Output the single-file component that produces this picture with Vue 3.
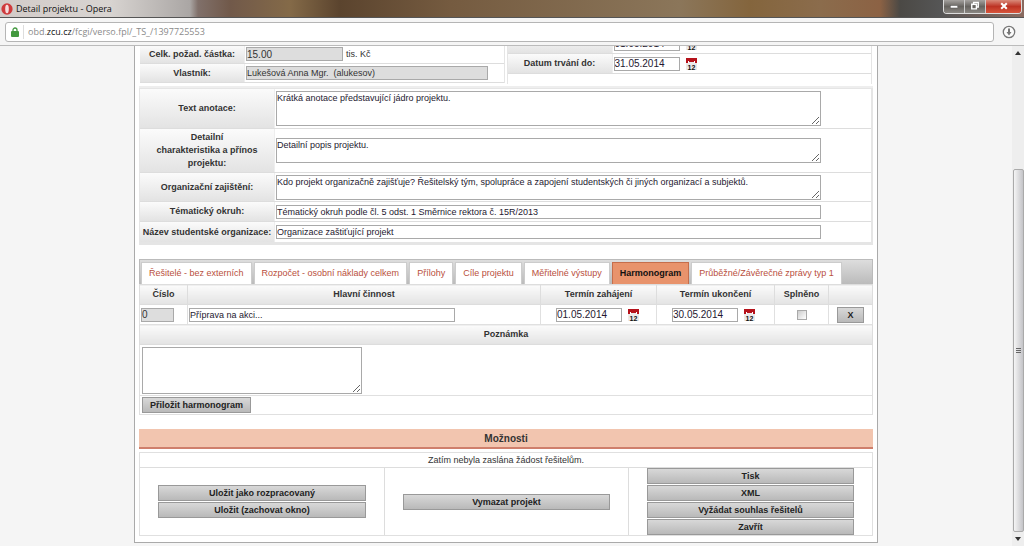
<script setup>
import { ref } from 'vue'

const tabs = [
  'Řešitelé - bez externích',
  'Rozpočet - osobní náklady celkem',
  'Přílohy',
  'Cíle projektu',
  'Měřitelné výstupy',
  'Harmonogram',
  'Průběžné/Závěrečné zprávy typ 1',
]
const active = ref('Harmonogram')

const fields = [
  { id: 'anotace', label: 'Text anotace:', size: 'tall', area: true, value: 'Krátká anotace představující jádro projektu.' },
  { id: 'detail', label: 'Detailní\ncharakteristika a přínos\nprojektu:', size: 'wrap', area: true, value: 'Detailní popis projektu.' },
  { id: 'zajisteni', label: 'Organizační zajištění:', size: 'mid', area: true, value: 'Kdo projekt organizačně zajišťuje? Řešitelský tým, spolupráce a zapojení studentských či jiných organizací a subjektů.' },
  { id: 'okruh', label: 'Tématický okruh:', size: 'line', area: false, value: 'Tématický okruh podle čl. 5 odst. 1 Směrnice rektora č. 15R/2013' },
  { id: 'organizace', label: 'Název studentské organizace:', size: 'line', area: false, value: 'Organizace zaštiťující projekt' },
]

const actions = [
  ['Uložit jako rozpracovaný', 'Uložit (zachovat okno)'],
  ['Vymazat projekt'],
  ['Tisk', 'XML', 'Vyžádat souhlas řešitelů', 'Zavřít'],
]
</script>

<template>
  <div class="window">
    <header class="titlebar">
      <svg class="opera" viewBox="0 0 12 12" aria-hidden="true">
        <ellipse cx="6" cy="6" rx="5.6" ry="5.8" fill="#cf3a3c" />
        <ellipse cx="6" cy="6" rx="1.8" ry="4.2" fill="#f6dcdc" />
      </svg>
      <span class="title">Detail projektu - Opera</span>
      <div class="controls">
        <button class="ctl" aria-label="Minimalizovat">
          <svg viewBox="0 0 20 14"><rect x="6" y="6" width="8" height="2.6" fill="#fff" stroke="#555" stroke-width=".5" /></svg>
        </button>
        <button class="ctl" aria-label="Obnovit">
          <svg viewBox="0 0 20 14"><path d="M8.5 5V2.5h5v5H12M6.5 4.5h5v5h-5z" fill="none" stroke="#fff" stroke-width="1.5" /></svg>
        </button>
        <button class="ctl close" aria-label="Zavřít okno">
          <svg viewBox="0 0 20 14"><path d="M7 3.5l6 6M13 3.5l-6 6" stroke="#fff" stroke-width="2.2" /></svg>
        </button>
      </div>
    </header>

    <div class="toolbar">
      <div class="address">
        <svg class="lock" viewBox="0 0 8 10" aria-hidden="true">
          <path d="M2 5V3a2 2 0 0 1 4 0v2" fill="none" stroke="#43993f" stroke-width="1.3" />
          <rect y="4" width="8" height="6" rx="1" fill="#43993f" />
        </svg>
        <span class="url">obd.<b>zcu.cz</b>/fcgi/verso.fpl/_TS_/1397725553</span>
      </div>
      <button class="download" aria-label="Stahování">
        <svg viewBox="0 0 14 14">
          <circle cx="7" cy="7" r="5.7" fill="#fafafa" stroke="#777" stroke-width="1.3" />
          <path d="M7 3.5v5" stroke="#777" stroke-width="2" />
          <path d="M4.5 7h5L7 10.5z" fill="#777" />
        </svg>
      </button>
    </div>

    <div class="viewport">
      <main class="page">
        <div class="sheet">
          <section class="summary">
            <div class="half left">
              <div class="row">
                <label for="castka">Celk. požad. částka:</label>
                <div class="cell"><input id="castka" class="amount" readonly value="15.00" /><span class="unit">tis. Kč</span></div>
              </div>
              <div class="row">
                <label for="vlastnik">Vlastník:</label>
                <div class="cell"><input id="vlastnik" class="owner" readonly value="Lukešová Anna Mgr.  (alukesov)" /></div>
              </div>
            </div>
            <div class="half right">
              <div class="row">
                <label for="od">Datum trvání od:</label>
                <div class="cell"><input id="od" class="date" value="01.05.2014" />
                  <svg class="cal" viewBox="0 0 11 12"><path d="M0 4h11v8H0z" fill="#ece9e9" /><path d="M0 0h11v5H9V3H8v1H3V3H2v2H0z" fill="#b5121b" /><path d="M2 3h1v2H2zM8 3h1v2H8z" fill="#fff" /><text x="5.5" y="11.5">12</text></svg>
                </div>
              </div>
              <div class="row">
                <label for="do">Datum trvání do:</label>
                <div class="cell"><input id="do" class="date" value="31.05.2014" />
                  <svg class="cal" viewBox="0 0 11 12"><path d="M0 4h11v8H0z" fill="#ece9e9" /><path d="M0 0h11v5H9V3H8v1H3V3H2v2H0z" fill="#b5121b" /><path d="M2 3h1v2H2zM8 3h1v2H8z" fill="#fff" /><text x="5.5" y="11.5">12</text></svg>
                </div>
              </div>
            </div>
          </section>

          <section class="details">
            <div v-for="f in fields" :key="f.id" class="row" :class="f.size">
              <label :for="f.id">{{ f.label }}</label>
              <div class="cell">
                <textarea v-if="f.area" :id="f.id" :value="f.value"></textarea>
                <input v-else :id="f.id" :value="f.value" />
              </div>
            </div>
          </section>

          <nav class="tabs">
            <button v-for="t in tabs" :key="t" class="tab" :class="{ on: t === active }" @click="active = t">{{ t }}</button>
          </nav>

          <table class="plan">
            <colgroup><col class="c1" /><col /><col class="c3" /><col class="c4" /><col class="c5" /><col class="c6" /></colgroup>
            <thead>
              <tr><th>Číslo</th><th>Hlavní činnost</th><th>Termín zahájení</th><th>Termín ukončení</th><th>Splněno</th><th></th></tr>
            </thead>
            <tbody>
              <tr class="item">
                <td><input class="num" aria-label="Číslo" readonly value="0" /></td>
                <td><input class="work" aria-label="Hlavní činnost" value="Příprava na akci..." /></td>
                <td><div class="when"><input class="date" aria-label="Termín zahájení" value="01.05.2014" />
                  <svg class="cal" viewBox="0 0 11 12"><path d="M0 4h11v8H0z" fill="#ece9e9" /><path d="M0 0h11v5H9V3H8v1H3V3H2v2H0z" fill="#b5121b" /><path d="M2 3h1v2H2zM8 3h1v2H8z" fill="#fff" /><text x="5.5" y="11.5">12</text></svg></div></td>
                <td><div class="when"><input class="date" aria-label="Termín ukončení" value="30.05.2014" />
                  <svg class="cal" viewBox="0 0 11 12"><path d="M0 4h11v8H0z" fill="#ece9e9" /><path d="M0 0h11v5H9V3H8v1H3V3H2v2H0z" fill="#b5121b" /><path d="M2 3h1v2H2zM8 3h1v2H8z" fill="#fff" /><text x="5.5" y="11.5">12</text></svg></div></td>
                <td class="mid"><input type="checkbox" class="check" aria-label="Splněno" /></td>
                <td class="mid"><button class="btn del">X</button></td>
              </tr>
              <tr><th colspan="6"><label for="poznamka">Poznámka</label></th></tr>
              <tr class="note"><td colspan="6"><textarea id="poznamka"></textarea></td></tr>
              <tr class="attach"><td colspan="6"><button class="btn">Přiložit harmonogram</button></td></tr>
            </tbody>
          </table>

          <h2 class="heading">Možnosti</h2>
          <section class="options">
            <p>Zatím nebyla zaslána žádost řešitelům.</p>
            <div class="groups">
              <div v-for="(g, i) in actions" :key="i" class="group">
                <button v-for="a in g" :key="a" class="btn wide">{{ a }}</button>
              </div>
            </div>
          </section>
        </div>
      </main>
      <div class="scroll" aria-hidden="true">
        <svg class="arrow" viewBox="0 0 6 4"><path d="M0 4l3-4 3 4z" /></svg>
        <div class="track"><div class="thumb"><i></i><i></i><i></i></div></div>
        <svg class="arrow" viewBox="0 0 6 4"><path d="M0 0l3 4 3-4z" /></svg>
      </div>
    </div>
  </div>
</template>

<style>
body { margin: 0; }
</style>

<style scoped>
* { box-sizing: border-box; }
.window {
  height: 100vh; display: flex; flex-direction: column; overflow: hidden;
  font: 9px/13px "Liberation Sans", Arial, sans-serif; color: #333;
}
button, input, textarea { font: inherit; color: inherit; margin: 0; border-radius: 0; }
.titlebar {
  flex: none; height: 18px; display: flex; align-items: center; padding-left: 1px;
  border-bottom: 1px solid #555;
  background: linear-gradient(90deg, #d2cbc8 0, #d8d4d1 110px, #aaa6a4 190px, #80706a 198px, #71594a 230px, #846a48 290px, #5b442e 340px, #755b40 450px, #8b765a 680px, #84653d 750px, #8b6c4c 820px, #8c6244 880px, #4b4945 900px, #555 940px, #8b6b60 100%);
}
.opera { width: 12px; height: 12px; }
.title { flex: 1; margin-left: 3px; font: 9px/14px "Open Sans", sans-serif; color: #111; }
.controls { align-self: flex-start; display: flex; height: 14px; margin-right: 2px; border: 1px solid #ddd; border-top: 0; border-radius: 0 0 4px 4px; overflow: hidden; }
.ctl { width: 21px; height: 13px; padding: 0; border: 0; border-right: 1px solid #ccc; background: linear-gradient(#a5a29f, #66635f 50%, #8b8883); }
.ctl svg { display: block; width: 20px; height: 13px; }
.ctl.close { width: 35px; border: 0; background: linear-gradient(#d98a7a, #bd3324 50%, #d8553b); }
.close svg { margin: 0 auto; }
.toolbar { flex: none; height: 28px; display: flex; align-items: center; padding: 0 8px 0 5px; gap: 8px; background: #f5f5f5; border-bottom: 1px solid #bbb; }
.address { flex: 1; height: 20px; display: flex; align-items: center; padding-left: 5px; border: 1px solid #b5b5b5; border-radius: 3px; background: #fff; }
.lock { width: 8px; height: 10px; }
.url { margin-left: 4px; padding-left: 4px; border-left: 1px solid #ddd; font: 9px/14px "Open Sans", sans-serif; color: #8a8a8a; }
.url b { font-weight: 400; color: #111; }
.download { width: 14px; height: 14px; padding: 0; border: 0; background: none; }
.download svg { display: block; }
.viewport { flex: 1; min-height: 0; display: flex; background: #f5f5f5; }
.page { flex: 1; min-width: 0; display: flex; flex-direction: column; justify-content: flex-end; align-items: center; overflow: hidden; padding-bottom: 3px; }
.sheet { flex: none; width: 100%; max-width: 744px; padding: 3px 4px 6px; background: #fff; border: 1px solid #aaa; }
input, textarea { height: 14px; padding: 0; border: 1px solid #a9a9a9; background: #fff; color: #251830; outline: 0; }
input[readonly] { background: #ddd; color: #333; }
textarea { display: block; line-height: 12px; }
label, th { font-weight: 700; text-align: center; background: linear-gradient(#fbfbfb, #e3e3e3); }
.row { display: flex; }
.row > label { flex: none; display: flex; align-items: center; justify-content: center; border-right: 1px solid #eee; white-space: pre-line; }
.cell { flex: 1; display: flex; align-items: center; padding-left: 1px; }
.summary { display: flex; gap: 2px; padding: 0 1px 2px; border-bottom: 2px solid #eee; }
.half { flex: 1; align-self: flex-end; border-right: 1px solid #e5e5e5; }
.half .row { height: 19px; border-bottom: 1px solid #ddd; }
.half .row > label { width: 105px; }
.half.left { margin-bottom: 1px; }
.half.right { padding-bottom: 10px; border-left: 1px solid #e5e5e5; }
.half.right .row { height: 20px; }
.amount { width: 97px; font-size: 10px; }
.owner { width: 242px; }
.unit { margin-left: 3px; }
.date { width: 66px; font-size: 10px; }
.cal { flex: none; width: 11px; height: 12px; margin-left: 6px; }
.cal text { font: 700 7px "Liberation Sans", sans-serif; text-anchor: middle; fill: #111; }
.details { border: 1px solid #e5e5e5; border-width: 1px 2px 3px 1px; }
.details .row { border-bottom: 1px solid #ddd; }
.details .row > label { width: 135px; }
.details .row:last-child { border-bottom: 0; }
.details .cell { padding-right: 50px; }
.details textarea, .details input { width: 100%; }
.tall { height: 40px; }
.tall textarea { height: 35px; }
.wrap { height: 44px; }
.wrap textarea, .mid textarea { height: 25px; }
.details .mid { height: 29px; }
.line { height: 20px; }
.tabs { display: flex; gap: 2px; height: 25px; margin-top: 14px; padding: 2px 1px 0; background: linear-gradient(#ddd, #bbb); border: 1px solid #bbb; border-bottom: 0; }
.tab { padding: 0 7px; border: 1px solid #ccc; border-bottom: 0; background: #fff; color: #b94f3d; white-space: nowrap; }
.tab.on { background: #e8936c; border-color: #c56e4c; color: #111; font-weight: 700; }
.plan { width: 100%; table-layout: fixed; border-collapse: collapse; }
.plan th { height: 20px; padding: 0; border: 1px solid #ddd; }
.plan th label { background: none; }
.plan td { height: 20px; padding: 0 0 0 1px; border: 1px solid #e0e0e0; }
.c1 { width: 48px; } .c3 { width: 116px; } .c4 { width: 118px; } .c5 { width: 54px; } .c6 { width: 44px; }
.plan input, .plan button { display: block; }
.num { width: 33px; font-size: 10px; }
.work { width: 266px; }
.when { display: flex; align-items: center; padding-left: 14px; }
.plan .mid { padding: 0; }
.plan .check { appearance: none; width: 10px; height: 10px; margin: 0 auto; background: linear-gradient(135deg, #ccc, #fff); }
.btn { height: 16px; padding: 0 7px; border: 1px solid #999; background: linear-gradient(#d8d8d8, #b9b9b9); font-weight: 700; line-height: 12px; color: #222; white-space: nowrap; }
.plan .del { width: 27px; margin: 0 auto; padding: 0; }
.plan .note td { height: 51px; padding-left: 2px; }
.note textarea { width: 220px; height: 47px; }
.plan .attach td { height: 19px; padding-left: 2px; }
.heading { margin: 14px 0 3px; height: 20px; font-size: 10px; line-height: 19px; text-align: center; background: #f2c5af; border-bottom: 2px solid #cf7f6c; }
.options { border: 1px solid #e0e0e0; }
.options p { margin: 0; height: 15px; line-height: 14px; text-align: center; border-bottom: 1px solid #ddd; }
.groups { display: grid; grid-template-columns: repeat(3, 1fr); height: 67px; }
.group { display: flex; flex-direction: column; align-items: center; justify-content: center; gap: 1px; }
.group + .group { border-left: 1px solid #ddd; }
.wide { width: 85%; }
.scroll { flex: none; width: 12px; display: flex; flex-direction: column; align-items: center; padding: 5px 0; background: #eee; }
.arrow { width: 6px; height: 4px; fill: #333; }
.track { flex: 1; width: 11px; display: flex; flex-direction: column; justify-content: flex-end; padding-bottom: 5px; }
.thumb { height: 76%; display: flex; flex-direction: column; align-items: center; justify-content: center; gap: 1px; border: 1px solid #aaa; border-radius: 2px; background: linear-gradient(90deg, #f5f5f5, #c4c4c8); }
.thumb i { width: 5px; height: 1px; background: #666; }
</style>
